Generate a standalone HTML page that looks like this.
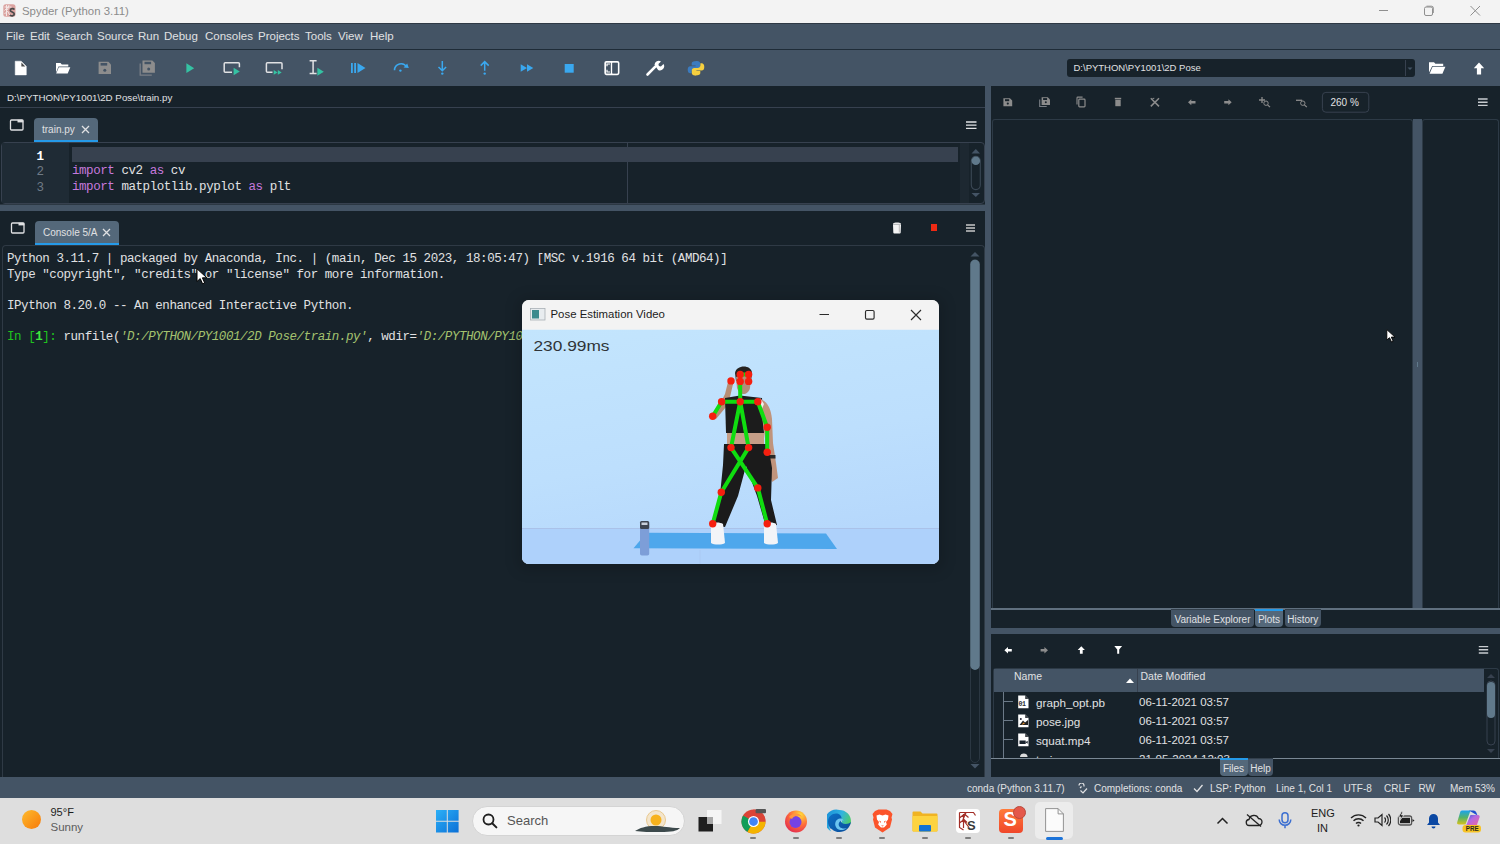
<!DOCTYPE html>
<html><head><meta charset="utf-8">
<style>
*{margin:0;padding:0;box-sizing:border-box}
html,body{width:1500px;height:844px;overflow:hidden;background:#17222a;font-family:"Liberation Sans",sans-serif;position:relative}
.a{position:absolute}
.ui{font-family:"Liberation Sans",sans-serif;color:#e0e1e3}
.mono{font-family:"Liberation Mono",monospace;font-size:12.5px;letter-spacing:-0.44px;white-space:pre;color:#e0e1e3}
</style></head><body>

<!-- title bar -->
<div class="a" style="left:0;top:0;width:1500px;height:23px;background:#f3f3f3"></div>
<div class="a ui" style="left:22px;top:5px;font-size:11.4px;color:#8b8b8b;white-space:nowrap">Spyder (Python 3.11)</div>
<svg class="a" style="left:3px;top:4px" width="13" height="13" viewBox="0 0 13 13"><rect x="0.3" y="0.3" width="12.2" height="12.4" rx="2.5" fill="#dba3a0"/><path d="M1.5 3h7M1.5 6.5l4-4M3.5 1v11M1.5 10l3-3l2.5 4.5M6 1l-1.5 5" fill="none" stroke="#f4e6e5" stroke-width="1"/><path d="M11.3 5.6c-0.6-1.3-4-1.3-4 0.7c0 2 4 1.5 4 3.8c0 2.2-3.6 2.2-4.4 0.8" fill="none" stroke="#4a4a4a" stroke-width="1.7"/></svg>
<svg class="a" style="left:1370px;top:0" width="130" height="22" viewBox="1370 0 130 22"><path d="M1379 10.5h9" stroke="#8f8f8f" stroke-width="1"/><rect x="1424.5" y="7" width="8" height="8.5" rx="1.5" fill="none" stroke="#8f8f8f" stroke-width="1"/><path d="M1426.5 6.2h5a1.8 1.8 0 0 1 1.8 1.8v5" fill="none" stroke="#8f8f8f" stroke-width="1"/><path d="M1470.5 6l9.5 9.5M1480 6l-9.5 9.5" stroke="#8f8f8f" stroke-width="1"/></svg>

<!-- menu bar -->
<div class="a" style="left:0;top:23px;width:1500px;height:27px;background:#445465;border-top:1px solid #2f3945"></div>
<div class="a" style="left:0;top:49px;width:1500px;height:1px;background:#1f2c38"></div>
<div id="menu" class="a ui" style="left:0;top:30px;font-size:11.5px;white-space:nowrap;color:#e0e1e3">
<span class="a" style="left:6px">File</span><span class="a" style="left:30px">Edit</span><span class="a" style="left:56px">Search</span><span class="a" style="left:97px">Source</span><span class="a" style="left:138px">Run</span><span class="a" style="left:164px">Debug</span><span class="a" style="left:205px">Consoles</span><span class="a" style="left:258px">Projects</span><span class="a" style="left:305px">Tools</span><span class="a" style="left:338px">View</span><span class="a" style="left:370px">Help</span>
</div>

<!-- toolbar -->
<div class="a" style="left:0;top:50px;width:1500px;height:36px;background:#445465"></div>


<!-- toolbar icons -->
<svg class="a" style="left:0;top:49px" width="720" height="37" viewBox="0 49 720 37">
 <!-- new file -->
 <path d="M15.2 61.2h6l5.1 5.1v8.6h-11.1z" fill="#ffffff" stroke="#ffffff" stroke-width="0.5" stroke-linejoin="round"/><path d="M21.4 62.6v3.9h3.9z" fill="#4a4a4a"/>
 <!-- open folder -->
 <path d="M56 63h4.5l1.3 1.4h6.5v2H58.5l-2.5 6.2z" fill="#ffffff"/><path d="M58.8 67.3h11.5l-2.6 6.2H56.2z" fill="#ffffff"/>
 <!-- save -->
 <path d="M98.6 61.8h9.8l2.6 2.6v9.7H98.6z" fill="#8d8d8d"/><rect x="100.6" y="63" width="6.6" height="2.6" fill="#445465"/><circle cx="104.8" cy="70.3" r="1.5" fill="#445465"/>
 <!-- save all -->
 <path d="M142.5 60.5h9.8l2.6 2.6v9.7h-12.4z" fill="#8d8d8d"/><rect x="144.5" y="61.8" width="6.6" height="2.4" fill="#445465"/><circle cx="148.7" cy="69" r="1.5" fill="#445465"/><path d="M140.2 63.5v11.6h11.6" fill="none" stroke="#7a7f86" stroke-width="1.3"/>
 <!-- run -->
 <path d="M186.4 63.3L194.2 68.2L186.4 73.1z" fill="#35c2a3"/>
 <!-- run cell -->
 <path d="M232 72.3h-6.8a1 1 0 0 1-1-1v-7.5a1 1 0 0 1 1-1h13.2a1 1 0 0 1 1 1v3.5" fill="none" stroke="#e0e1e3" stroke-width="1.5"/><path d="M233.6 67.8L239.8 71.5L233.6 75.2z" fill="#35c2a3"/>
 <!-- run cell advance -->
 <path d="M272.5 72.3h-5.1a1 1 0 0 1-1-1v-7.5a1 1 0 0 1 1-1h13.6a1 1 0 0 1 1 1v5.5" fill="none" stroke="#e0e1e3" stroke-width="1.5"/><path d="M273.7 70L277.6 72.4L273.7 74.8zM277.8 70L281.7 72.4L277.8 74.8z" fill="#35c2a3"/>
 <!-- run selection -->
 <path d="M309.6 60.8h7M313.1 60.8v12.8M309.6 73.6h7" fill="none" stroke="#e0e1e3" stroke-width="1.5"/><path d="M317.4 67.8L323.8 71.8L317.4 75.8z" fill="#35c2a3"/>
 <!-- debug -->
 <rect x="351" y="63" width="1.8" height="10" fill="#3aa8ef"/><rect x="354.2" y="63" width="1.8" height="10" fill="#3aa8ef"/><path d="M357.5 63L365.5 68L357.5 73z" fill="#3aa8ef"/>
 <!-- step over -->
 <path d="M394.5 70.2a6.5 6.5 0 0 1 12.2-3" fill="none" stroke="#3aa8ef" stroke-width="1.6"/><path d="M403.6 67.5l5.2 0.6l-1.6-4.6z" fill="#3aa8ef"/><circle cx="400.4" cy="70.6" r="1.2" fill="#3aa8ef"/>
 <!-- step into -->
 <path d="M442.3 61v10.2M438.5 67l3.8 3.8l3.8-3.8" fill="none" stroke="#3aa8ef" stroke-width="1.5"/><circle cx="442.3" cy="73.6" r="1.2" fill="#3aa8ef"/>
 <!-- step return -->
 <path d="M484.7 62v8.8M480.7 65.6l4-4l4 4" fill="none" stroke="#3aa8ef" stroke-width="1.5"/><circle cx="484.7" cy="73.6" r="1.2" fill="#3aa8ef"/>
 <!-- continue -->
 <path d="M520.7 64.3L527 68L520.7 71.7zM527 64.3L533.3 68L527 71.7z" fill="#3aa8ef"/>
 <!-- stop -->
 <rect x="564.7" y="64" width="9" height="8.7" fill="#3aa8ef"/>
 <!-- maximize pane -->
 <rect x="605.2" y="61.9" width="13.4" height="12.4" rx="1.2" fill="none" stroke="#ffffff" stroke-width="1.7"/><path d="M611.6 61.7v12.6" stroke="#ffffff" stroke-width="1.6"/><rect x="612.4" y="62.9" width="5.1" height="10.4" fill="#445465"/><path d="M610 64h-3v2.2M610 72h-3v-2.2" fill="none" stroke="#ffffff" stroke-width="1.2"/>
 <!-- wrench -->
 <path d="M647.5 74.5L655.3 66.7" stroke="#ffffff" stroke-width="2.6" stroke-linecap="round"/><path d="M654.5 64.8a4.2 4.2 0 0 1 6.5-3.4l-2.6 2.6l0.5 2l2 0.5l2.6-2.6a4.2 4.2 0 0 1-5.4 6z" fill="#ffffff"/>
 <!-- python logo -->
 <path d="M695.5 61.3c-3.3 0-3.8 1.4-3.8 2.6v1.7h3.9v0.6h-5.3c-1.5 0-2.6 1.1-2.6 3.5c0 2.4 1.1 3.6 2.6 3.6h1.3v-2c0-1.5 1.2-2.7 2.7-2.7h3.6c1.3 0 2.3-1 2.3-2.3v-2.8c0-1.3-1.2-2.3-3-2.5c-0.7-0.1-1.1 0-1.7 0z" fill="#3b7bbf"/>
 <path d="M696.5 75.3c3.3 0 3.8-1.4 3.8-2.6v-1.7h-3.9v-0.6h5.3c1.5 0 2.6-1.1 2.6-3.5c0-2.4-1.1-3.6-2.6-3.6h-1.3v2c0 1.5-1.2 2.7-2.7 2.7h-3.6c-1.3 0-2.3 1-2.3 2.3v2.8c0 1.3 1.2 2.3 3 2.5c0.7 0.1 1.1 0 1.7 0z" fill="#f5cf3f"/>
</svg>
<!-- working dir combo -->
<div class="a" style="left:1067px;top:59px;width:348px;height:18px;background:#17222a;border-radius:3px"></div>
<div class="a" style="left:1405px;top:60px;width:1px;height:16px;background:#37414f"></div>
<svg class="a" style="left:1406px;top:64px" width="8" height="8"><path d="M1.5 3.5h5l-2.5 2.5z" fill="#445465"/></svg>
<div class="a ui" style="left:1073.5px;top:62px;font-size:9.5px;color:#e0e1e3;white-space:nowrap">D:\PYTHON\PY1001\2D Pose</div>
<svg class="a" style="left:1428px;top:60px" width="18" height="16" viewBox="0 0 18 16"><path d="M1 2.2h5l1.4 1.5h7.8v2.2H4.2L1 12.5z" fill="#ffffff"/><path d="M4.6 6.8h12.8l-3 7H1.6z" fill="#ffffff"/></svg>
<svg class="a" style="left:1472px;top:61px" width="14" height="15" viewBox="0 0 14 15"><path d="M7 1.5L12.2 7.2H9.1v6.3H4.9V7.2H1.8z" fill="#ffffff"/></svg>

<!-- path bar -->
<div class="a" style="left:0;top:86px;width:985px;height:21px;background:#17222a"></div>
<div class="a" style="left:0;top:107px;width:985px;height:1px;background:#37414f"></div>
<div class="a ui" style="left:7px;top:92px;font-size:9.75px;white-space:nowrap;color:#e0e1e3">D:\PYTHON\PY1001\2D Pose\train.py</div>

<!-- vertical splitter -->
<div class="a" style="left:985px;top:86px;width:6px;height:691px;background:#445465"></div>

<!-- editor -->
<div class="a" style="left:34px;top:118px;width:64px;height:24px;background:#54687a;border-radius:4px 4px 0 0;border-bottom:2.5px solid #259ae9"></div>
<div class="a" style="left:1px;top:142px;width:984px;height:62px;border:1px solid #37414f;border-radius:4px;background:#17222a"></div>
<div class="a" style="left:2px;top:143px;width:67px;height:60px;background:#1f2b35"></div>
<div class="a" style="left:72px;top:147px;width:886px;height:15px;background:#37414f"></div>

<!-- horizontal splitter -->
<div class="a" style="left:0;top:204px;width:985px;height:7px;background:#445465;border-top:1.5px solid #2c3843"></div>

<!-- console -->
<div class="a" style="left:35px;top:221px;width:84px;height:24px;background:#54687a;border-radius:4px 4px 0 0;border-bottom:2.5px solid #259ae9"></div>
<div class="a" style="left:2px;top:245px;width:983px;height:532px;border:1px solid #2f3a45;border-bottom:none;border-radius:4px 4px 0 0;background:#17222a"></div>


<!-- editor content -->
<svg class="a" style="left:9px;top:119px" width="16" height="12" viewBox="0 0 16 12"><rect x="1.5" y="1" width="12.5" height="10" rx="1" fill="none" stroke="#e0e1e3" stroke-width="1.3"/><rect x="8.5" y="0.8" width="5.8" height="2.6" fill="#e0e1e3"/></svg>
<div class="a ui" style="left:42px;top:124px;font-size:10px;color:#e0e1e3;white-space:nowrap">train.py</div>
<svg class="a" style="left:81px;top:125px" width="9" height="9" viewBox="0 0 9 9"><path d="M1 1L8 8M8 1L1 8" stroke="#e0e1e3" stroke-width="1.3"/></svg>
<svg class="a" style="left:966px;top:120.5px" width="10.5" height="9" viewBox="0 0 10.5 9"><path d="M0 1h10.5M0 4.2h10.5M0 7.4h10.5" stroke="#e0e1e3" stroke-width="1.3"/></svg>
<div class="a mono" style="left:36.5px;top:149.5px;line-height:15.5px;color:#6f7a85">1
2
3</div>
<div class="a mono" style="left:36.5px;top:149.5px;line-height:15.5px;color:#ffffff;font-weight:bold">1</div>
<div class="a mono" style="left:72px;top:164.2px;line-height:15.5px"><span style="color:#c679dd">import</span> cv2 <span style="color:#c679dd">as</span> cv
<span style="color:#c679dd">import</span> matplotlib.pyplot <span style="color:#c679dd">as</span> plt</div>
<div class="a" style="left:627px;top:143px;width:1px;height:60px;background:#37414f"></div>
<div class="a" style="left:959.5px;top:143px;width:9.5px;height:60px;background:#1d2831"></div>
<svg class="a" style="left:969px;top:147px" width="14" height="54" viewBox="0 147 14 54"><path d="M2.5 153.4L6.8 149L11 153.4Z" fill="#445465"/><rect x="2.3" y="156.3" width="9" height="33.3" rx="4.5" fill="none" stroke="#3a4754" stroke-width="1.1"/><circle cx="6.8" cy="160.8" r="4.3" fill="#60798b"/><path d="M2.5 193L6.8 197L11 193Z" fill="#445465"/></svg>

<!-- console content -->
<svg class="a" style="left:10px;top:222px" width="16" height="12" viewBox="0 0 16 12"><rect x="1.5" y="1" width="12.5" height="10" rx="1" fill="none" stroke="#e0e1e3" stroke-width="1.3"/><rect x="8.5" y="0.8" width="5.8" height="2.6" fill="#e0e1e3"/></svg>
<div class="a ui" style="left:43px;top:227px;font-size:10px;color:#e0e1e3;white-space:nowrap">Console 5/A</div>
<svg class="a" style="left:102px;top:228px" width="9" height="9" viewBox="0 0 9 9"><path d="M1 1L8 8M8 1L1 8" stroke="#e0e1e3" stroke-width="1.3"/></svg>
<svg class="a" style="left:892px;top:221px" width="10" height="13" viewBox="0 0 10 13"><path d="M1 2.5c1-1.5 7-1.5 8 0v1H1z" fill="#e8e8e8"/><path d="M1 3.5h8l-0.3 8a1 1 0 0 1-1 1H2.3a1 1 0 0 1-1-1z" fill="#f4f4f4"/><path d="M7.3 4v7.5" stroke="#b8b8b8" stroke-width="1"/></svg>
<div class="a" style="left:930.5px;top:224px;width:6.5px;height:6.5px;background:#ee2a14"></div>
<svg class="a" style="left:965.5px;top:223.5px" width="9.5" height="8" viewBox="0 0 9.5 8"><path d="M0 1h9.5M0 4h9.5M0 7h9.5" stroke="#c8c8c8" stroke-width="1.3"/></svg>
<div class="a mono" style="left:7px;top:252px;line-height:15.5px">Python 3.11.7 | packaged by Anaconda, Inc. | (main, Dec 15 2023, 18:05:47) [MSC v.1916 64 bit (AMD64)]
Type "copyright", "credits" or "license" for more information.

IPython 8.20.0 -- An enhanced Interactive Python.

<span style="color:#1fc21f">In [</span><span style="color:#3ee83e;font-weight:bold">1</span><span style="color:#1fc21f">]:</span> runfile(<span style="color:#a5c26f;font-style:italic">'D:/PYTHON/PY1001/2D Pose/train.py'</span>, wdir=<span style="color:#a5c26f;font-style:italic">'D:/PYTHON/PY1001/2D Pose'</span>)</div>
<svg class="a" style="left:968px;top:250px" width="14" height="524" viewBox="0 0 14 524"><path d="M2.5 6.5L7 2L11.5 6.5Z" fill="#445465"/><rect x="2.5" y="9.5" width="9" height="503" rx="4.5" fill="none" stroke="#2b3742" stroke-width="1"/><rect x="2.3" y="9.7" width="9.4" height="410.3" rx="4.7" fill="#60798b"/><path d="M2.5 514L7 518.5L11.5 514Z" fill="#445465"/></svg>

<!-- status bar -->
<div class="a" style="left:0;top:776.5px;width:1500px;height:21px;background:#445465"></div>
<div class="a ui" style="left:0;top:783px;height:14px;font-size:10px;color:#e0e1e3;white-space:nowrap">
<span class="a" style="left:967px">conda (Python 3.11.7)</span>
<svg class="a" style="left:1077px;top:0px" width="11" height="11" viewBox="0 0 11 11"><path d="M2 2.5a2.5 2.5 0 0 1 5 0v1M4.5 3.5l-1.5 1.5M3.5 7.5l2.5 2.5l4-4.5" fill="none" stroke="#e0e1e3" stroke-width="1.2"/></svg>
<span class="a" style="left:1094px">Completions: conda</span>
<svg class="a" style="left:1193px;top:1px" width="10" height="9" viewBox="0 0 10 9"><path d="M1 4.5l3 3l5.5-6.5" fill="none" stroke="#e0e1e3" stroke-width="1.3"/></svg>
<span class="a" style="left:1210px">LSP: Python</span>
<span class="a" style="left:1276px">Line 1, Col 1</span>
<span class="a" style="left:1343.5px">UTF-8</span>
<span class="a" style="left:1384px">CRLF</span>
<span class="a" style="left:1418.5px">RW</span>
<span class="a" style="left:1450px">Mem 53%</span>
</div>

<!-- taskbar -->
<div class="a" style="left:0;top:797.5px;width:1500px;height:47px;background:#dedede"></div>
<div class="a" style="left:22px;top:810px;width:19px;height:19px;border-radius:50%;background:linear-gradient(135deg,#fdbb2d,#f77a0b)"></div>
<div class="a ui" style="left:50.5px;top:806.3px;font-size:11px;color:#1c1c1c;white-space:nowrap">95°F</div>
<div class="a ui" style="left:50.5px;top:821.2px;font-size:11.5px;color:#5c5c5c;white-space:nowrap">Sunny</div>
<!-- windows logo -->
<svg class="a" style="left:436px;top:810px" width="23" height="23" viewBox="0 0 23 23"><defs><linearGradient id="wg" x1="0" y1="0" x2="1" y2="1"><stop offset="0" stop-color="#2cb0f7"/><stop offset="1" stop-color="#0b6fd6"/></linearGradient></defs><path d="M0 0h10.8v10.8H0zM11.8 0h10.8v10.8H11.8zM0 11.8h10.8v10.8H0zM11.8 11.8h10.8v10.8H11.8z" fill="url(#wg)"/></svg>
<!-- search -->
<div class="a" style="left:472px;top:806px;width:212.5px;height:30px;border-radius:15px;background:#f6f6f6;border:1px solid #d4d4d4"></div>
<svg class="a" style="left:482px;top:813px" width="16" height="16" viewBox="0 0 16 16"><circle cx="6.5" cy="6.5" r="5" fill="none" stroke="#1f1f1f" stroke-width="1.8"/><path d="M10.2 10.2l4.2 4.2" stroke="#1f1f1f" stroke-width="2" stroke-linecap="round"/></svg>
<div class="a ui" style="left:507px;top:813px;font-size:13px;color:#555555;white-space:nowrap">Search</div>
<svg class="a" style="left:635px;top:809px" width="45" height="25" viewBox="0 0 45 25"><circle cx="21" cy="11" r="9.5" fill="#f3e5cc" stroke="#e9c98f" stroke-width="1"/><circle cx="21" cy="11" r="5.5" fill="#f7b21c"/><path d="M0 22c5-3 10-5 20-5c8 0 14 2 25 2c-3 3-8 4-20 4c-10 0-18 0-25-1z" fill="#3d4a4c"/></svg>
<!-- task view -->
<svg class="a" style="left:698px;top:810px" width="24" height="22" viewBox="0 0 24 22"><rect x="9" y="0" width="14.5" height="14" fill="#f5f5f5"/><rect x="0.5" y="7" width="14.5" height="14.5" fill="#1e1e1e"/><rect x="9" y="7" width="6" height="7" fill="#a8a8a8"/></svg>
<!-- chrome -->
<svg class="a" style="left:741px;top:809px" width="25" height="25" viewBox="0 0 24 24"><circle cx="12" cy="12" r="11.5" fill="#db4437"/><path d="M12 12L2 6.2A11.5 11.5 0 0 0 6.2 22z" fill="#0f9d58"/><path d="M12 12L6.2 22A11.5 11.5 0 0 0 23.5 12z" fill="#f4b400"/><path d="M12 12L23.5 12A11.5 11.5 0 0 0 12 0.5z" fill="#db4437"/><circle cx="12" cy="12" r="5.3" fill="#ffffff"/><circle cx="12" cy="12" r="4.2" fill="#4285f4"/><rect x="14" y="0" width="10" height="4" rx="1" fill="#555"/></svg>
<!-- firefox -->
<svg class="a" style="left:784px;top:809px" width="24" height="24" viewBox="0 0 24 24"><defs><radialGradient id="ff" cx="0.7" cy="0.2" r="0.9"><stop offset="0" stop-color="#ffdd3a"/><stop offset="0.5" stop-color="#ff7139"/><stop offset="1" stop-color="#e22850"/></radialGradient></defs><circle cx="12" cy="12.5" r="11" fill="url(#ff)"/><circle cx="11.5" cy="13" r="6" fill="#7542e5"/><path d="M5 8c3-4 10-5 13 0c-3-2-8-2-10 2z" fill="#ff9640"/></svg>
<!-- edge -->
<svg class="a" style="left:827px;top:808.5px" width="25" height="25" viewBox="0 0 25 25"><defs><linearGradient id="eg1" x1="0" y1="0.2" x2="1" y2="0.6"><stop offset="0" stop-color="#1a8fd8"/><stop offset="0.55" stop-color="#31b3e0"/><stop offset="1" stop-color="#53cf5d"/></linearGradient><linearGradient id="eg2" x1="0" y1="0" x2="1" y2="1"><stop offset="0" stop-color="#0d6fc5"/><stop offset="1" stop-color="#0a4d9a"/></linearGradient></defs>
<path d="M12.5 1a11.5 11.5 0 0 1 11.5 11.5c0 3-2.5 4.5-5.5 4.5c-3 0-4.5-1.2-4.5-2.8c0-1 0.8-1.5 0.8-2.5c0-2-2.2-3.8-5-3.8c-4 0-7.5 3.5-7.5 8.5c0 2.5 0.8 4.5 2 6A11.5 11.5 0 0 1 12.5 1z" fill="url(#eg1)"/>
<path d="M4.3 20.4C2 18 1 15 1 12.5c0-5 4-8 8-8c3 0 5.5 2 5.5 4.5c0 1-0.8 1.6-0.8 2.6c0 2 2 3.5 5 3.5c2 0 4-0.8 5.2-2c-0.8 6-5.7 10-11.4 10c-3 0-6-1.2-8.2-3.7z" fill="url(#eg2)"/>
<path d="M8.5 17c-1-3 0.5-7 4.5-7.5c2-0.2 3.5 1 3.8 2.2c-1.5-0.5-3.5 0-4.5 1.5c-1 1.6-0.8 3.5 0.5 4.8c1.5 1.5 4.5 2 7 1c-2 2-5 2.5-7.5 1.8c-1.8-0.5-3.2-1.8-3.8-3.8z" fill="#6cc4f0"/>
</svg>
<!-- brave -->
<svg class="a" style="left:872px;top:809px" width="21" height="24" viewBox="0 0 21 24"><path d="M3 2l3.5-1.5h8L18 2l2.5 3l-1 3.5l0.5 2l-2 8l-7.5 5l-7.5-5l-2-8l0.5-2l-1-3.5z" fill="#fb542b"/><path d="M4.5 6.5l3-1l3 1l3-1l3 1l-0.5 4l-2 2.5l0.8 2.5l-1.3 1.5l-1.5 1.5h-3l-1.5-1.5l-1.3-1.5l0.8-2.5l-2-2.5z" fill="#ffffff"/><path d="M7 11.5l2 1l-0.5 1.5zM14 11.5l-2 1l0.5 1.5z" fill="#fb542b"/><path d="M9 16.5h3l-1.5 1z" fill="#fb542b"/></svg>
<!-- explorer -->
<svg class="a" style="left:912px;top:811px" width="26" height="21" viewBox="0 0 26 21"><path d="M0.5 1.5a1 1 0 0 1 1-1h7l2 2h14a1 1 0 0 1 1 1v16a1 1 0 0 1-1 1H1.5a1 1 0 0 1-1-1z" fill="#f0b323"/><path d="M0.5 5h25v14.5a1 1 0 0 1-1 1H1.5a1 1 0 0 1-1-1z" fill="#fdd33f"/><rect x="7" y="14" width="12" height="6.5" rx="1" fill="#1172d4"/></svg>
<!-- spyder -->
<div class="a" style="left:956px;top:809px;width:24px;height:24px;background:#ffffff;border-radius:4px"></div>
<svg class="a" style="left:956px;top:809px" width="24" height="24" viewBox="0 0 24 24"><path d="M3.5 3.5h14l2 3M3.5 3.5v15l4 2.5M3.5 9l5-4l4 3.5M3.5 14l4.5-3.5l3 3M7.5 5v14M10 3.5l-3 7l6 8" fill="none" stroke="#a22e27" stroke-width="1.2"/><text x="11" y="20.5" font-family="Liberation Sans" font-size="13" font-weight="bold" fill="#3a3a3a">S</text></svg>
<!-- sublime-like S -->
<div class="a" style="left:999px;top:809px;width:24px;height:24px;background:linear-gradient(180deg,#ff7b3a,#f0472a);border-radius:4px"></div>
<div class="a ui" style="left:1003.5px;top:808px;font-size:20px;font-weight:bold;color:#fff">S</div>
<div class="a" style="left:1012.5px;top:806px;width:13px;height:13px;border-radius:50%;background:#e4584a;border:1.5px solid #b84b3d"></div>
<!-- active doc -->
<div class="a" style="left:1035px;top:802px;width:38px;height:37px;background:#ececec;border-radius:5px"></div>
<svg class="a" style="left:1045px;top:808px" width="19" height="24" viewBox="0 0 19 24"><path d="M0.6 0.6h12.5l5.3 5.3v17.5H0.6z" fill="#fbfbfb" stroke="#888" stroke-width="0.9"/><path d="M13.1 0.6v5.3h5.3" fill="none" stroke="#888" stroke-width="0.9"/></svg>
<div class="a" style="left:1045.5px;top:836.5px;width:17px;height:3px;border-radius:1.5px;background:#1c73d9"></div>
<!-- running dots -->
<div class="a" style="left:750px;top:836.5px;width:6px;height:2.5px;border-radius:1px;background:#7d7d7d"></div>
<div class="a" style="left:793px;top:836.5px;width:6px;height:2.5px;border-radius:1px;background:#7d7d7d"></div>
<div class="a" style="left:836px;top:836.5px;width:6px;height:2.5px;border-radius:1px;background:#7d7d7d"></div>
<div class="a" style="left:879px;top:836.5px;width:6px;height:2.5px;border-radius:1px;background:#7d7d7d"></div>
<div class="a" style="left:922px;top:836.5px;width:6px;height:2.5px;border-radius:1px;background:#7d7d7d"></div>
<div class="a" style="left:965px;top:836.5px;width:6px;height:2.5px;border-radius:1px;background:#7d7d7d"></div>
<div class="a" style="left:1008px;top:836.5px;width:6px;height:2.5px;border-radius:1px;background:#7d7d7d"></div>
<!-- tray -->
<svg class="a" style="left:1216px;top:816px" width="13" height="9" viewBox="0 0 13 9"><path d="M1.5 7.5l5-5l5 5" fill="none" stroke="#222" stroke-width="1.5"/></svg>
<svg class="a" style="left:1245px;top:813px" width="18" height="15" viewBox="0 0 18 15"><path d="M4.5 12.5h9a3.5 3.5 0 0 0 0-7a5 5 0 0 0-9.5 1a3 3 0 0 0 0.5 6z" fill="none" stroke="#222" stroke-width="1.3"/><path d="M2 1.5l14 12" stroke="#222" stroke-width="1.3"/></svg>
<svg class="a" style="left:1278px;top:812px" width="14" height="17" viewBox="0 0 14 17"><rect x="4" y="0.8" width="6" height="10" rx="3" fill="none" stroke="#3c6fd1" stroke-width="1.5"/><path d="M1.2 7.5a5.8 5.8 0 0 0 11.6 0M7 13.3v3" fill="none" stroke="#3c6fd1" stroke-width="1.5"/></svg>
<div class="a ui" style="left:1311px;top:806.5px;font-size:11px;color:#1c1c1c;white-space:nowrap">ENG</div>
<div class="a ui" style="left:1317px;top:822px;font-size:11px;color:#1c1c1c;white-space:nowrap">IN</div>
<svg class="a" style="left:1350px;top:813px" width="17" height="14" viewBox="0 0 17 14"><path d="M1 5a10.5 10.5 0 0 1 15 0M3.5 7.8a7 7 0 0 1 10 0M6 10.5a3.5 3.5 0 0 1 5 0" fill="none" stroke="#222" stroke-width="1.4"/><circle cx="8.5" cy="12.5" r="1.1" fill="#222"/></svg>
<svg class="a" style="left:1374px;top:813px" width="17" height="14" viewBox="0 0 17 14"><path d="M1 5h3l4-3.5v11L4 9H1z" fill="none" stroke="#222" stroke-width="1.2"/><path d="M10.5 4.5a3.5 3.5 0 0 1 0 5M12.5 2.5a6.5 6.5 0 0 1 0 9M14.5 1a9 9 0 0 1 0 12" fill="none" stroke="#222" stroke-width="1.2"/></svg>
<svg class="a" style="left:1397px;top:811px" width="19" height="16" viewBox="0 0 19 16"><rect x="1.4" y="5" width="13.2" height="9" rx="2" fill="none" stroke="#555" stroke-width="1.3"/><rect x="3" y="6.8" width="10" height="5.4" fill="#1e1e1e"/><path d="M15.5 8l2 1.5l-2 1.5z" fill="#1e1e1e"/><path d="M4.5 0.5l-3 5.5h2.5l-1.5 4l4.5-6h-2.5l1.5-3.5z" fill="#1e1e1e" stroke="#dedede" stroke-width="0.8"/></svg>
<svg class="a" style="left:1426px;top:813px" width="15" height="16" viewBox="0 0 15 16"><path d="M7.5 1a4.5 4.5 0 0 1 4.5 4.5v4l2 2.5H1l2-2.5v-4A4.5 4.5 0 0 1 7.5 1z" fill="#0b48a3"/><path d="M5.5 13.5a2 2 0 0 0 4 0z" fill="#0b48a3"/></svg>
<svg class="a" style="left:1456px;top:808px" width="27" height="26" viewBox="1456 808 27 26"><defs><linearGradient id="cpl" x1="0" y1="0" x2="0" y2="1"><stop offset="0" stop-color="#1aa3f0"/><stop offset="0.5" stop-color="#54b36a"/><stop offset="1" stop-color="#d8c21a"/></linearGradient><linearGradient id="cpr" x1="0" y1="0" x2="1" y2="1"><stop offset="0" stop-color="#2a55d8"/><stop offset="0.4" stop-color="#b56ae0"/><stop offset="1" stop-color="#f5679a"/></linearGradient></defs>
<path d="M1462 810.5h8.5l-5 14h-6.5c-1.5 0-2.2-1-1.8-2.3l2.8-9.5c0.4-1.4 1-2.2 2-2.2z" fill="url(#cpl)"/>
<path d="M1469 810.5h4.5c1.5 0 2.5 1 3 2.5l1 2.5z" fill="#1f4fd0"/>
<path d="M1470.5 815h7.5c1.3 0 2 1 1.6 2.3l-2.6 7.5c-0.4 1.2-1.2 1.5-2.2 1.5h-9z" fill="url(#cpr)"/>
<rect x="1462.5" y="825" width="18.5" height="7.5" rx="3" fill="#f7c325"/>
<text x="1465.8" y="831.3" font-family="Liberation Sans" font-size="6.3" font-weight="bold" fill="#2a2a1a">PRE</text></svg>

<!-- right pane -->
<div class="a" style="left:991px;top:86px;width:509px;height:691px;background:#17222a"></div>


<!-- plots toolbar -->
<svg class="a" style="left:991px;top:86px" width="509" height="33" viewBox="991 86 509 33">
 <path d="M1003.4 98.2h6.5l2.3 2.3v5.7h-8.8z" fill="#8c8c8c"/><rect x="1005" y="99.2" width="4.2" height="2" fill="#17222a"/><circle cx="1007.8" cy="103.6" r="1.1" fill="#17222a"/>
 <path d="M1041.6 97.2h6.2l2.2 2.2v5.6h-8.4z" fill="#8c8c8c"/><rect x="1043.1" y="98.1" width="4" height="1.9" fill="#17222a"/><circle cx="1045.8" cy="102.3" r="1" fill="#17222a"/><path d="M1039.7 99.5v7h7" fill="none" stroke="#7a7f86" stroke-width="1.1"/>
 <rect x="1078.8" y="99.2" width="6.2" height="7.6" rx="0.8" fill="none" stroke="#8c8c8c" stroke-width="1.2"/><path d="M1077 104.5v-6.6a0.8 0.8 0 0 1 0.8-0.8h4.8" fill="none" stroke="#8c8c8c" stroke-width="1.1"/>
 <rect x="1114.8" y="97.8" width="6.4" height="1.5" fill="#8c8c8c"/><rect x="1115.3" y="99.8" width="5.4" height="6.4" fill="#8c8c8c"/>
 <path d="M1150.8 98.2l8.2 8.2M1159 98.2l-8.2 8.2" stroke="#8c8c8c" stroke-width="1.5"/><path d="M1152.5 98.5l1.8-0.2" stroke="#8c8c8c" stroke-width="1"/>
 <path d="M1188 102.2l3.3-3v1.9h4.2v2.3h-4.2v1.9z" fill="#8c8c8c"/>
 <path d="M1231.7 102.2l-3.3-3v1.9h-4.2v2.3h4.2v1.9z" fill="#8c8c8c"/>
 <path d="M1259 100h6M1262 97v6" stroke="#8c8c8c" stroke-width="1.3"/><circle cx="1266" cy="103.2" r="2.2" fill="none" stroke="#8c8c8c" stroke-width="1"/><path d="M1267.6 104.8l2.4 2.4" stroke="#8c8c8c" stroke-width="1.2"/>
 <path d="M1296 100.3h6.2" stroke="#8c8c8c" stroke-width="1.3"/><circle cx="1302.8" cy="103.2" r="2.2" fill="none" stroke="#8c8c8c" stroke-width="1"/><path d="M1304.4 104.8l2.4 2.4" stroke="#8c8c8c" stroke-width="1.2"/>
 <rect x="1322.4" y="92.4" width="46.4" height="19.8" rx="3.5" fill="none" stroke="#37414f" stroke-width="1"/>
 <path d="M1478 99h9.6M1478 102.2h9.6M1478 105.4h9.6" stroke="#c8ccd0" stroke-width="1.4"/>
</svg>
<div class="a ui" style="left:1330.5px;top:96.5px;font-size:10px;color:#e0e1e3;white-space:nowrap">260 %</div>
<!-- plots frames -->
<div class="a" style="left:992px;top:118.5px;width:421px;height:491px;border:1px solid #2d3a46;border-bottom:none;border-radius:3px 3px 0 0;background:#17222a"></div>
<div class="a" style="left:1413px;top:119px;width:9px;height:490px;background:#445465"></div>
<div class="a" style="left:1416.5px;top:362px;width:1px;height:5px;background:#60798b"></div>
<div class="a" style="left:1422px;top:118.5px;width:77px;height:491px;border:1px solid #2d3a46;border-bottom:none;border-radius:3px 3px 0 0;background:#17222a"></div>
<div class="a" style="left:991px;top:608px;width:509px;height:1.5px;background:#60707f"></div>
<!-- tab bar 1 -->
<div class="a ui" style="left:1171px;top:608.5px;width:83px;height:18.5px;background:#445465;border-radius:0 0 4px 4px;border-top:1px solid #33404c;font-size:10px;line-height:19px;text-align:center">Variable Explorer</div>
<div class="a ui" style="left:1255px;top:608.5px;width:28px;height:18.5px;background:#54687a;border-radius:0 0 4px 4px;border-top:2.2px solid #259ae9;font-size:10px;line-height:18px;text-align:center">Plots</div>
<div class="a ui" style="left:1284.5px;top:608.5px;width:36.5px;height:18.5px;background:#445465;border-radius:0 0 4px 4px;border-top:1px solid #33404c;font-size:10px;line-height:19px;text-align:center">History</div>
<!-- horizontal splitter right -->
<div class="a" style="left:991px;top:628px;width:509px;height:6px;background:#445465"></div>
<!-- files toolbar -->
<svg class="a" style="left:991px;top:634px" width="509" height="35" viewBox="991 634 509 35">
 <path d="M1004.4 650.2l3.6-3.3v2.1h3.8v2.4h-3.8v2.1z" fill="#ffffff"/>
 <path d="M1048 650.2l-3.6-3.3v2.1h-3.8v2.4h3.8v2.1z" fill="#8c8c8c"/>
 <path d="M1081.3 646.2l3.6 3.8h-2.2v3.8h-2.8v-3.8h-2.2z" fill="#ffffff"/>
 <path d="M1114.3 646h7.8l-2.9 3.6v4.2h-2v-4.2z" fill="#ffffff"/>
 <path d="M1478.8 646.6h9.4M1478.8 649.8h9.4M1478.8 653h9.4" stroke="#c8ccd0" stroke-width="1.4"/>
</svg>
<!-- files frame -->
<div class="a" style="left:993px;top:668px;width:506px;height:91px;border:1px solid #2d3a46;border-bottom:none;border-radius:3px 3px 0 0"></div>
<div class="a" style="left:994px;top:669px;width:490px;height:23px;background:#445465"></div>
<div class="a" style="left:1137px;top:669px;width:1px;height:23px;background:#37414f"></div>
<div class="a ui" style="left:1014px;top:669.5px;font-size:10.5px;color:#e0e1e3;white-space:nowrap">Name</div>
<div class="a ui" style="left:1140.5px;top:669.5px;font-size:10.5px;color:#e0e1e3;white-space:nowrap">Date Modified</div>
<svg class="a" style="left:1125px;top:677px" width="10" height="7"><path d="M1 6h8l-4-4.5z" fill="#ffffff"/></svg>
<svg class="a" style="left:1484px;top:669px" width="15" height="90" viewBox="0 0 15 90"><path d="M3 9L7 5L11 9Z" fill="#37414f"/><rect x="3" y="12" width="8" height="64" rx="4" fill="none" stroke="#37414f" stroke-width="1"/><rect x="3" y="13" width="8" height="36" rx="4" fill="#60798b"/><path d="M3 80L7 84L11 80Z" fill="#37414f"/></svg>
<div class="a" style="left:1003px;top:692px;width:1px;height:66px;background:#6c7a88"></div>
<div class="a" style="left:1003px;top:701px;width:10px;height:1px;background:#6c7a88"></div>
<div class="a" style="left:1003px;top:720px;width:10px;height:1px;background:#6c7a88"></div>
<div class="a" style="left:1003px;top:739px;width:10px;height:1px;background:#6c7a88"></div>
<svg class="a" style="left:1017px;top:695px" width="13" height="62" viewBox="0 0 13 62">
 <path d="M1.2 0.6h7l3.3 3.3v9.3H1.2z" fill="#ffffff"/><path d="M8.2 0.6v3.3h3.3z" fill="#3a3f44"/><text x="1.6" y="10.6" font-family="Liberation Mono" font-size="6.6" font-weight="bold" fill="#2a2f35" letter-spacing="-0.6">01</text>
 <path d="M1.2 19.6h7l3.3 3.3v9.3H1.2z" fill="#ffffff"/><path d="M8.2 19.6v3.3h3.3z" fill="#3a3f44"/><path d="M2.5 30l3.5-4.5l2 2l3-2.5v5z" fill="#222"/><path d="M4.5 30l2-2.5l1.5 1z" fill="#e8912a"/><circle cx="3.8" cy="24" r="1" fill="#223"/>
 <path d="M1.2 38.6h7l3.3 3.3v9.3H1.2z" fill="#ffffff"/><path d="M8.2 38.6v3.3h3.3z" fill="#3a3f44"/><rect x="2.5" y="45.5" width="6.2" height="3.5" fill="#19232d"/><path d="M8.5 47.2l2.2-1.5v3z" fill="#19232d"/>
 <path d="M3 62c0-2.5 1.8-3.5 3.8-3.5s3.8 1 3.8 3.5z" fill="#dcdcdc"/>
</svg>
<div class="a" style="left:994px;top:692px;width:490px;height:65.5px;overflow:hidden">
<div class="a ui" style="left:42px;top:0.5px;font-size:11.7px;line-height:19px;color:#e0e1e3;white-space:pre">graph_opt.pb
pose.jpg
squat.mp4
train.py</div>
<div class="a ui" style="left:145px;top:0.5px;font-size:11.5px;line-height:19px;color:#e0e1e3;white-space:pre">06-11-2021 03:57
06-11-2021 03:57
06-11-2021 03:57
21-05-2024 12:03</div>
</div>






<div class="a" style="left:991px;top:757.5px;width:509px;height:1.5px;background:#7a8894"></div>
<!-- files/help tabs -->
<div class="a ui" style="left:1219.5px;top:757.5px;width:28px;height:18.5px;background:#54687a;border-radius:0 0 4px 4px;border-top:2.2px solid #259ae9;font-size:10px;line-height:18px;text-align:center">Files</div>
<div class="a ui" style="left:1248px;top:757.5px;width:25px;height:18.5px;background:#445465;border-radius:0 0 4px 4px;border-top:1px solid #33404c;font-size:10px;line-height:19px;text-align:center">Help</div>

<!-- pose window -->
<div class="a" style="left:516px;top:296px;width:429px;height:276px;border-radius:12px;background:rgba(0,0,0,0.12);filter:blur(6px)"></div>
<div class="a" style="left:522px;top:300px;width:417px;height:264px;border-radius:7px;overflow:hidden;background:#f3f3f3">
<svg class="a" style="left:0;top:0" width="417" height="264" viewBox="522 300 417 264">
 <defs>
  <linearGradient id="wall" x1="0" y1="0" x2="0.3" y2="1"><stop offset="0" stop-color="#c3e5fd"/><stop offset="0.6" stop-color="#bddffd"/><stop offset="1" stop-color="#b6d8fc"/></linearGradient>
 </defs>
 <rect x="522" y="329.5" width="417" height="234.5" fill="url(#wall)"/>
 <rect x="522" y="528.5" width="417" height="35.5" fill="#aed1fb"/>
 <path d="M522 528.5H939" stroke="#a9bfe6" stroke-width="0.9"/>
 <path d="M700 550v14" stroke="#a8c6ee" stroke-width="0.6"/>
 <!-- mat -->
 <path d="M633.5 548.2L646.5 532.8L826 533.6L837 549z" fill="#4ea7ec"/>
 <!-- bottle -->
 <rect x="640" y="522" width="9.2" height="33.5" rx="1.8" fill="#7d9ed8"/>
 <rect x="640" y="521" width="9.2" height="8" rx="1.5" fill="#3d4552"/>
 <rect x="641.5" y="522.5" width="6" height="2.5" fill="#c8d0dc"/>
 <!-- person -->
 <path d="M735 373c1-8 16-9 17 0l-1 8h-15z" fill="#262220"/>
 <path d="M736 377c3-2 12-2 15 0l-1 11c-1 4-4 6-6.5 6c-3 0-5-2-6.5-6z" fill="#b48c78"/>
 <path d="M721 402l-9.5 14l4.5 3l10-12l4-10l4-17l-5-2l-4 16z" fill="#b88d74"/>
 <path d="M725 398l15-2.5l22 2.5l2 35h-38z" fill="#1c1c1c"/>
 <path d="M727 433h37v12h-37z" fill="#c59e87"/>
 <path d="M760 399c7 2 11 9 12 20l1 24l3 20l2 15l-6 4l-4-12l-2-24l-3-22z" fill="#c0947c"/>
 <rect x="769.5" y="455" width="6" height="3.5" fill="#2a2a2a"/>
 <path d="M724 444h44l4 24l-1 32l6 25l-11 2l-9-31l-11-30l-8 30l-13 31l-14-2l9-30l3-30z" fill="#1b1b1b"/>
 <path d="M711 524c3-2 9-2 12 0l1 9l1 10c-3 2-11 2-14 0z" fill="#f2f4f8"/>
 <path d="M764 524c3-2 10-2 12 0l1 9l1 10c-3 2-11 2-14 0z" fill="#f2f4f8"/>
 <path d="M760 398l4 6l-3 7l-3-6z" fill="#f0f0f0"/>
 <!-- skeleton lines -->
 <g stroke="#10dd10" stroke-width="4" stroke-linecap="round" fill="none">
  <path d="M740.2 381.4L740.2 401.7M721.6 401.7L757.8 401.7M721.6 401.7L712.7 416.2M757.8 401.7L767.2 427.3L767.2 452.3M740.2 401.7L731 447.6M740.2 401.7L748.6 447.6M731 447.6L757.8 487.9L767.2 523.7M748.6 447.6L721.3 492.3L712.7 523.7M740.2 374.5L748.6 374.5"/>
 </g>
 <g fill="#f51f0f">
  <circle cx="740.2" cy="374.5" r="3.7"/><circle cx="748.6" cy="374.5" r="3.7"/><circle cx="740.2" cy="381.4" r="3.7"/><circle cx="748.6" cy="381.4" r="3.7"/><circle cx="731" cy="380.9" r="3.7"/>
  <circle cx="740.2" cy="401.7" r="3.7"/><circle cx="721.6" cy="401.7" r="3.7"/><circle cx="757.8" cy="401.7" r="3.7"/>
  <circle cx="712.7" cy="416.2" r="3.7"/><circle cx="767.2" cy="427.3" r="3.7"/><circle cx="767.2" cy="452.3" r="3.7"/>
  <circle cx="731" cy="447.6" r="3.7"/><circle cx="748.6" cy="447.6" r="3.7"/>
  <circle cx="721.3" cy="492.3" r="3.7"/><circle cx="757.8" cy="487.9" r="3.7"/>
  <circle cx="712.7" cy="523.7" r="3.7"/><circle cx="767.2" cy="523.7" r="3.7"/>
 </g>
 <text x="533.5" y="350.8" font-family="Liberation Sans" font-size="15.5" fill="#2f3438" textLength="76" lengthAdjust="spacingAndGlyphs">230.99ms</text>
 <!-- title bar -->
 <rect x="522" y="300" width="417" height="29.5" fill="#f3f3f3"/>
 <rect x="530.5" y="308.5" width="14.5" height="11.5" fill="#e8ecef" stroke="#a9b0b5" stroke-width="0.8"/>
 <rect x="532" y="310" width="7" height="8.5" fill="#3c8a8e"/>
 <path d="M819.5 314.5h9.5" stroke="#2b2b2b" stroke-width="1.1"/>
 <rect x="865.5" y="310.5" width="8.6" height="8.6" rx="1.3" fill="none" stroke="#2b2b2b" stroke-width="1.15"/>
 <path d="M911 310l10 10M921 310l-10 10" stroke="#2b2b2b" stroke-width="1.15"/>
</svg>
<div class="a ui" style="left:28.5px;top:8px;font-size:11.4px;color:#1c1c1c;white-space:nowrap">Pose Estimation Video</div>
</div>

<!-- cursors -->
<svg class="a" style="left:196px;top:268px" width="13" height="18" viewBox="0 0 13 18"><path d="M1 0.8V13.5L4.2 10.6L6.6 15.8L8.7 14.9L6.4 9.8H10.8Z" fill="#ffffff" stroke="#000" stroke-width="1"/></svg>
<svg class="a" style="left:1386px;top:328.5px" width="11" height="15" viewBox="0 0 11 15"><path d="M0.8 0.6V11L3.5 8.7L5.5 13L7.2 12.3L5.3 8.1H9Z" fill="#ffffff" stroke="#000" stroke-width="0.9"/></svg>
</body></html>
